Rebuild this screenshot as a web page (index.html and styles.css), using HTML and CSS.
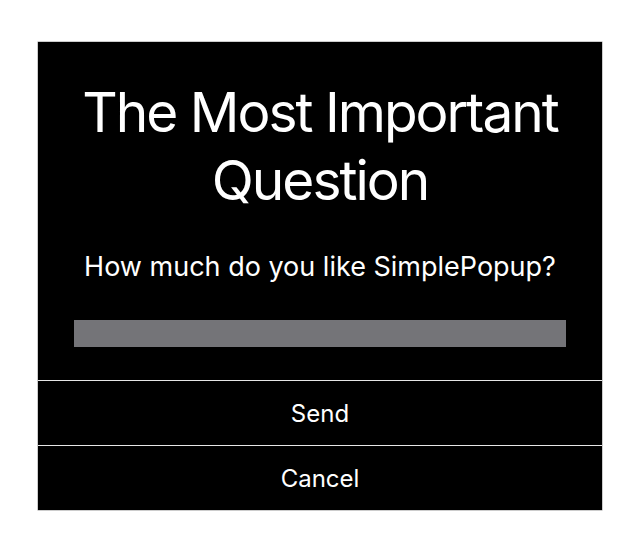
FILE: index.html
```html
<!DOCTYPE html>
<html>
<head>
<meta charset="utf-8">
<link rel="stylesheet" href="styles.css">
</head>
<body>
<div class="popup">
  <div class="content">
    <h1 class="title">The Most Important Question</h1>
    <p class="message">How much do you like SimplePopup?</p>
    <div class="field"></div>
  </div>
  <div class="button">Send</div>
  <div class="button">Cancel</div>
</div>
</body>
</html>
```
FILE: styles.css
```css
html, body {
  margin: 0;
  padding: 0;
  background: #ffffff;
}
body {
  width: 634px;
  height: 536px;
  font-family: Inter, "Liberation Sans", sans-serif;
  padding-top: 42px;
  box-sizing: border-box;
}
.popup {
  margin: 0 auto 0 38px;
  width: 564px;
  height: 468px;
  background: #000;
  color: #fff;
  display: flex;
  flex-direction: column;
  box-shadow: 0 0 0 0.5px #999;
}
.content {
  height: 338px;
  box-sizing: border-box;
  padding: 36px 20px 0;
  display: flex;
  flex-direction: column;
  align-items: center;
}
.title {
  margin: 0;
  width: 490px;
  font-size: 55px;
  font-weight: 400;
  line-height: 68px;
  text-align: center;
  letter-spacing: -2px;
}
.message {
  margin: 36px 0 0;
  font-size: 27px;
  line-height: 34px;
  text-align: center;
}
.field {
  margin-top: 36px;
  width: 492px;
  height: 27px;
  background: #747478;
}
.button {
  border-top: 1px solid #e6e6e6;
  height: 64px;
  display: flex;
  align-items: center;
  justify-content: center;
  font-size: 24px;
}
```
